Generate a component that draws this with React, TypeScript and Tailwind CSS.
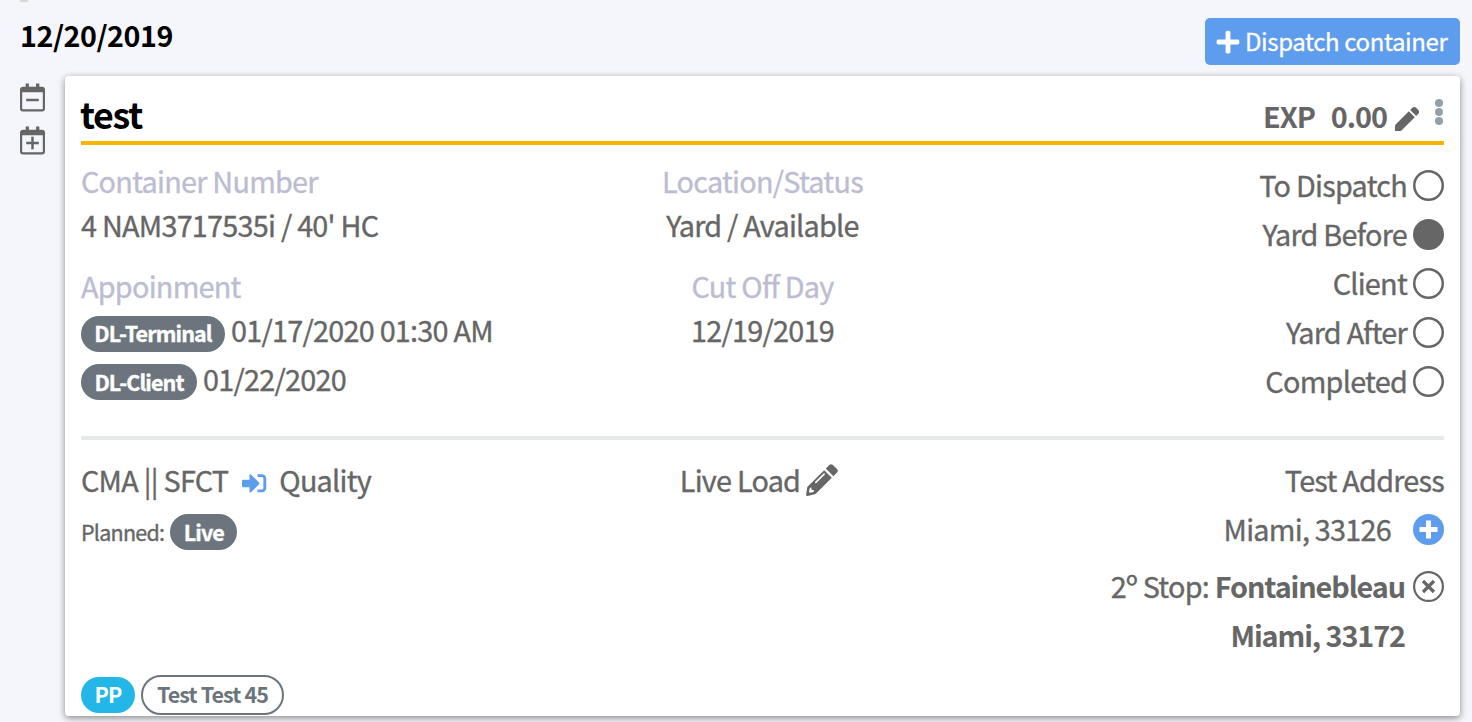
import type { ReactNode } from "react";
import { FaPlus } from "react-icons/fa";

const FONT = "font-['Noto_Sans_CJK_SC','Noto_Sans',sans-serif]";

function CalendarIcon({ plus }: { plus?: boolean }) {
  return (
    <svg width="26" height="30" viewBox="0 0 26 30" fill="none" stroke="#666" className="block">
      <rect x="1.1" y="5" width="22.8" height="22.4" rx="1.8" strokeWidth="2.2" />
      <path d="M1 8.500V6.500a2 2 0 0 1 2-2h19a2 2 0 0 1 2 2v2z" fill="#666" strokeWidth="1.300" />
      <path d="M7.300 5V0.500M17.700 5V0.500" strokeWidth="3.300" />
      <path d="M6.200 17h12.600" strokeWidth="2.500" />
      {plus && <path d="M12.500 10.700v12.600" strokeWidth="2.500" />}
    </svg>
  );
}

function EditIcon() {
  return (
    <svg width="24" height="24" viewBox="0 0 24 24" fill="#666" className="block">
      <path d="M0 24v-5.200q0-.8.600-1.400L13.800 4.200l6 6L6.700 23.300q-.7.700-1.500.7z" />
      <path d="M15.200 2.900l1.900-1.900a3 3 0 0 1 4.200 0l1.800 1.800a3 3 0 0 1 0 4.200l-1.900 1.900z" />
    </svg>
  );
}

function PencilIcon() {
  return (
    <svg width="32" height="32" viewBox="0 0 32 32" className="ml-[6px] mt-[9px] block">
      <path d="M18.200 6.200l7.600 7.600L9.800 29.800q-.4.400-1 .5L1.600 31.900Q-.1 32.200.1 30.500L1.200 23.400q.1-.6.500-1z" fill="#666" />
      <path d="M19.800 4.600l3.600-3.600q1.700-1.700 3.500 0l4.100 4.100q1.700 1.800 0 3.500l-3.600 3.600z" fill="#666" />
      <path d="M9.800 18.400l8.300-8.300" stroke="#fff" strokeWidth="1.600" strokeLinecap="round" />
      <path d="M3.700 24.300l1.600-1 .3 2.500 2.600.5-.8 1.700-3.500.8-.9-.9z" fill="#fff" />
    </svg>
  );
}

function EnterIcon() {
  return (
    <svg width="25" height="19" viewBox="0 0 25 19" className="block">
      <path d="M1.200 5.800h6.300V1.500c0-1 .9-1.500 1.600-.8l7.900 7.900c.5.500.5 1.200 0 1.700l-7.900 7.900c-.7.700-1.600.2-1.600-.8v-4.200H1.200A1.200 1.200 0 0 1 0 12V7a1.200 1.200 0 0 1 1.200-1.200z" fill="#5e9cee" />
      <path d="M15.500 1.600H20a2.800 2.800 0 0 1 2.800 2.800v9.700a2.800 2.800 0 0 1-2.800 2.800h-4.500" fill="none" stroke="#5e9cee" strokeWidth="2.900" />
    </svg>
  );
}

function Circle({ filled }: { filled?: boolean }) {
  return (
    <svg width="31" height="31" viewBox="0 0 31 31" className="block">
      <circle cx="15.500" cy="15.500" r="14.250" fill={filled ? "#666" : "none"} stroke="#666" strokeWidth="2.500" />
    </svg>
  );
}

function Label({ children }: { children: ReactNode }) {
  return <div className="h-11 leading-[46px] text-[#bcbcd2]">{children}</div>;
}

function Badge({ children, className }: { children: ReactNode; className: string }) {
  return (
    <span className={`flex shrink-0 items-center justify-center rounded-full text-[21.5px] font-bold leading-9 tracking-[-0.9px] ${className}`}>
      <span>{children}</span>
    </span>
  );
}

const STEPS = [
  { name: "To Dispatch" },
  { name: "Yard Before", done: true },
  { name: "Client" },
  { name: "Yard After" },
  { name: "Completed" },
];

export default function App() {
  return (
    <div className={`flex h-[722px] w-full flex-col overflow-hidden bg-[#f5f6fb] text-[#666] ${FONT}`}>
      <div className="ml-5 h-[2px] w-2 bg-[#d8d8d8]" />
      <header className="flex h-[74px] justify-between pl-5 pr-3">
        <h1 className="h-[64px] text-[28.65px] font-bold leading-[65px] tracking-[-0.45px] text-black">12/20/2019</h1>
        <button className="mt-4 flex h-[47px] w-[255px] items-center rounded-[5px] bg-[#5e9cee] pl-[10px] text-[24px] leading-[44px] tracking-[-0.4px] text-white [-webkit-text-stroke:0.3px]">
          <FaPlus className="mr-[4px] shrink-0" size={26} />
          <span className="-mt-px whitespace-nowrap">Dispatch container</span>
        </button>
      </header>
      <div className="flex">
        <aside className="flex w-[65px] flex-col gap-[13px] pl-5 pt-[7px]">
          <CalendarIcon />
          <CalendarIcon plus />
        </aside>
        <main className="flex h-[640px] w-[1395px] flex-col rounded-[4px] bg-white px-4 text-[28.8px] tracking-[-0.75px] shadow-[0_2px_7px_rgba(0,0,0,0.45)]">
          <div className="flex h-[69px] shrink-0 justify-between border-b-4 border-[#f7b500]">
            <h2 className="-ml-px text-[35.8px] font-bold leading-[75px] tracking-[-1.3px] text-black">test</h2>
            <div className="flex font-bold leading-[79px] tracking-[-1.05px]">
              <span>EXP</span>
              <span className="ml-[16px]">0.00</span>
              <span className="ml-[8px] mt-[31px]"><EditIcon /></span>
              <span className="ml-4 mr-px mt-[23px] flex flex-col gap-px">
                <i className="size-2 rounded-full bg-[#90a1aa]" />
                <i className="size-2 rounded-full bg-[#90a1aa]" />
                <i className="size-2 rounded-full bg-[#90a1aa]" />
              </span>
            </div>
          </div>
          <div className="flex h-[291px] shrink-0 justify-between whitespace-nowrap [-webkit-text-stroke:0.35px]">
            <section className="w-[560px] pt-[13px]">
              <Label>Container Number</Label>
              <div className="h-[61px] leading-[46px]">4 NAM3717535i / 40&apos; HC</div>
              <Label>Appoinment</Label>
              <div className="flex h-12 items-start">
                <Badge className="mt-[9px] h-9 w-[144px] bg-[#6c757d] pb-[2px] text-white">DL-Terminal</Badge>
                <span className="ml-[6px] leading-[45px]">01/17/2020 01:30 AM</span>
              </div>
              <div className="flex h-12 items-start">
                <Badge className="mt-[9px] h-9 w-[116px] bg-[#6c757d] text-white">DL-Client</Badge>
                <span className="ml-[6px] leading-[47px]">01/22/2020</span>
              </div>
            </section>
            <section className="w-[244px] pr-px pt-[13px] text-center">
              <Label>Location/Status</Label>
              <div className="h-[61px] leading-[46px]">Yard / Available</div>
              <Label>Cut Off Day</Label>
              <div className="leading-[46px]">12/19/2019</div>
            </section>
            <section className="flex w-[559px] flex-col items-end pt-[16px]">
              {STEPS.map((s) => (
                <div key={s.name} className="flex h-[49px] items-center">
                  <span className="mr-[6px] h-[49px] leading-[47px]">{s.name}</span>
                  <Circle filled={s.done} />
                </div>
              ))}
            </section>
          </div>
          <hr className="h-1 shrink-0 border-0 bg-[#e4e9ea]" />
          <div className="flex h-[237px] shrink-0 justify-between whitespace-nowrap [-webkit-text-stroke:0.35px]">
            <section className="w-[560px] pt-[15px]">
              <div className="flex h-[49px] leading-[49px]">
                <span>CMA || SFCT</span>
                <span className="ml-[14px] mt-[19px]"><EnterIcon /></span>
                <span className="ml-[12px]">Quality</span>
              </div>
              <div className="mt-[10px] flex h-9 items-center text-[21.5px] leading-9">
                <span className="-mt-px">Planned:</span>
                <Badge className="ml-[6px] h-9 w-[67px] bg-[#6c757d] text-white">Live</Badge>
              </div>
            </section>
            <section className="flex w-[244px] justify-center pr-[8px] pt-[15px] leading-[49px]">
              <span>Live Load</span>
              <PencilIcon />
            </section>
            <section className="flex w-[559px] flex-col items-end pt-[15px] leading-[49px]">
              <div className="h-[49px]">Test Address</div>
              <div className="flex h-[49px]">
                <span>Miami, 33126</span>
                <svg width="31" height="31" viewBox="0 0 31 31" className="ml-[22px] mt-[10px]">
                  <circle cx="15.5" cy="15.5" r="15.5" fill="#5e9cee" />
                  <path d="M15.5 6.500v18M6.500 15.5h18" stroke="#fff" strokeWidth="5" />
                </svg>
              </div>
              <div className="mt-2 flex h-[49px]">
                <span>2º Stop: <b className="tracking-[-1.1px] [-webkit-text-stroke:0]">Fontainebleau</b></span>
                <svg width="31" height="31" viewBox="0 0 31 31" fill="none" stroke="#666" className="ml-[8px] mt-[10px]">
                  <circle cx="15.5" cy="15.5" r="14.4" strokeWidth="2.2" />
                  <path d="M10 10l11 11M21 10l-11 11" strokeWidth="3.2" />
                </svg>
              </div>
              <div className="h-[49px] pr-[39px] font-bold tracking-[-1.1px] [-webkit-text-stroke:0]">Miami, 33172</div>
            </section>
          </div>
          <div className="flex h-9 shrink-0 items-center gap-[6px]">
            <Badge className="h-9 w-[54px] bg-[#22b7e7] pb-[2px] text-white">PP</Badge>
            <Badge className="h-10 w-[143px] border-2 border-[#6c757d] pb-[2px] text-[#6c757d]">Test Test 45</Badge>
          </div>
        </main>
      </div>
    </div>
  );
}
